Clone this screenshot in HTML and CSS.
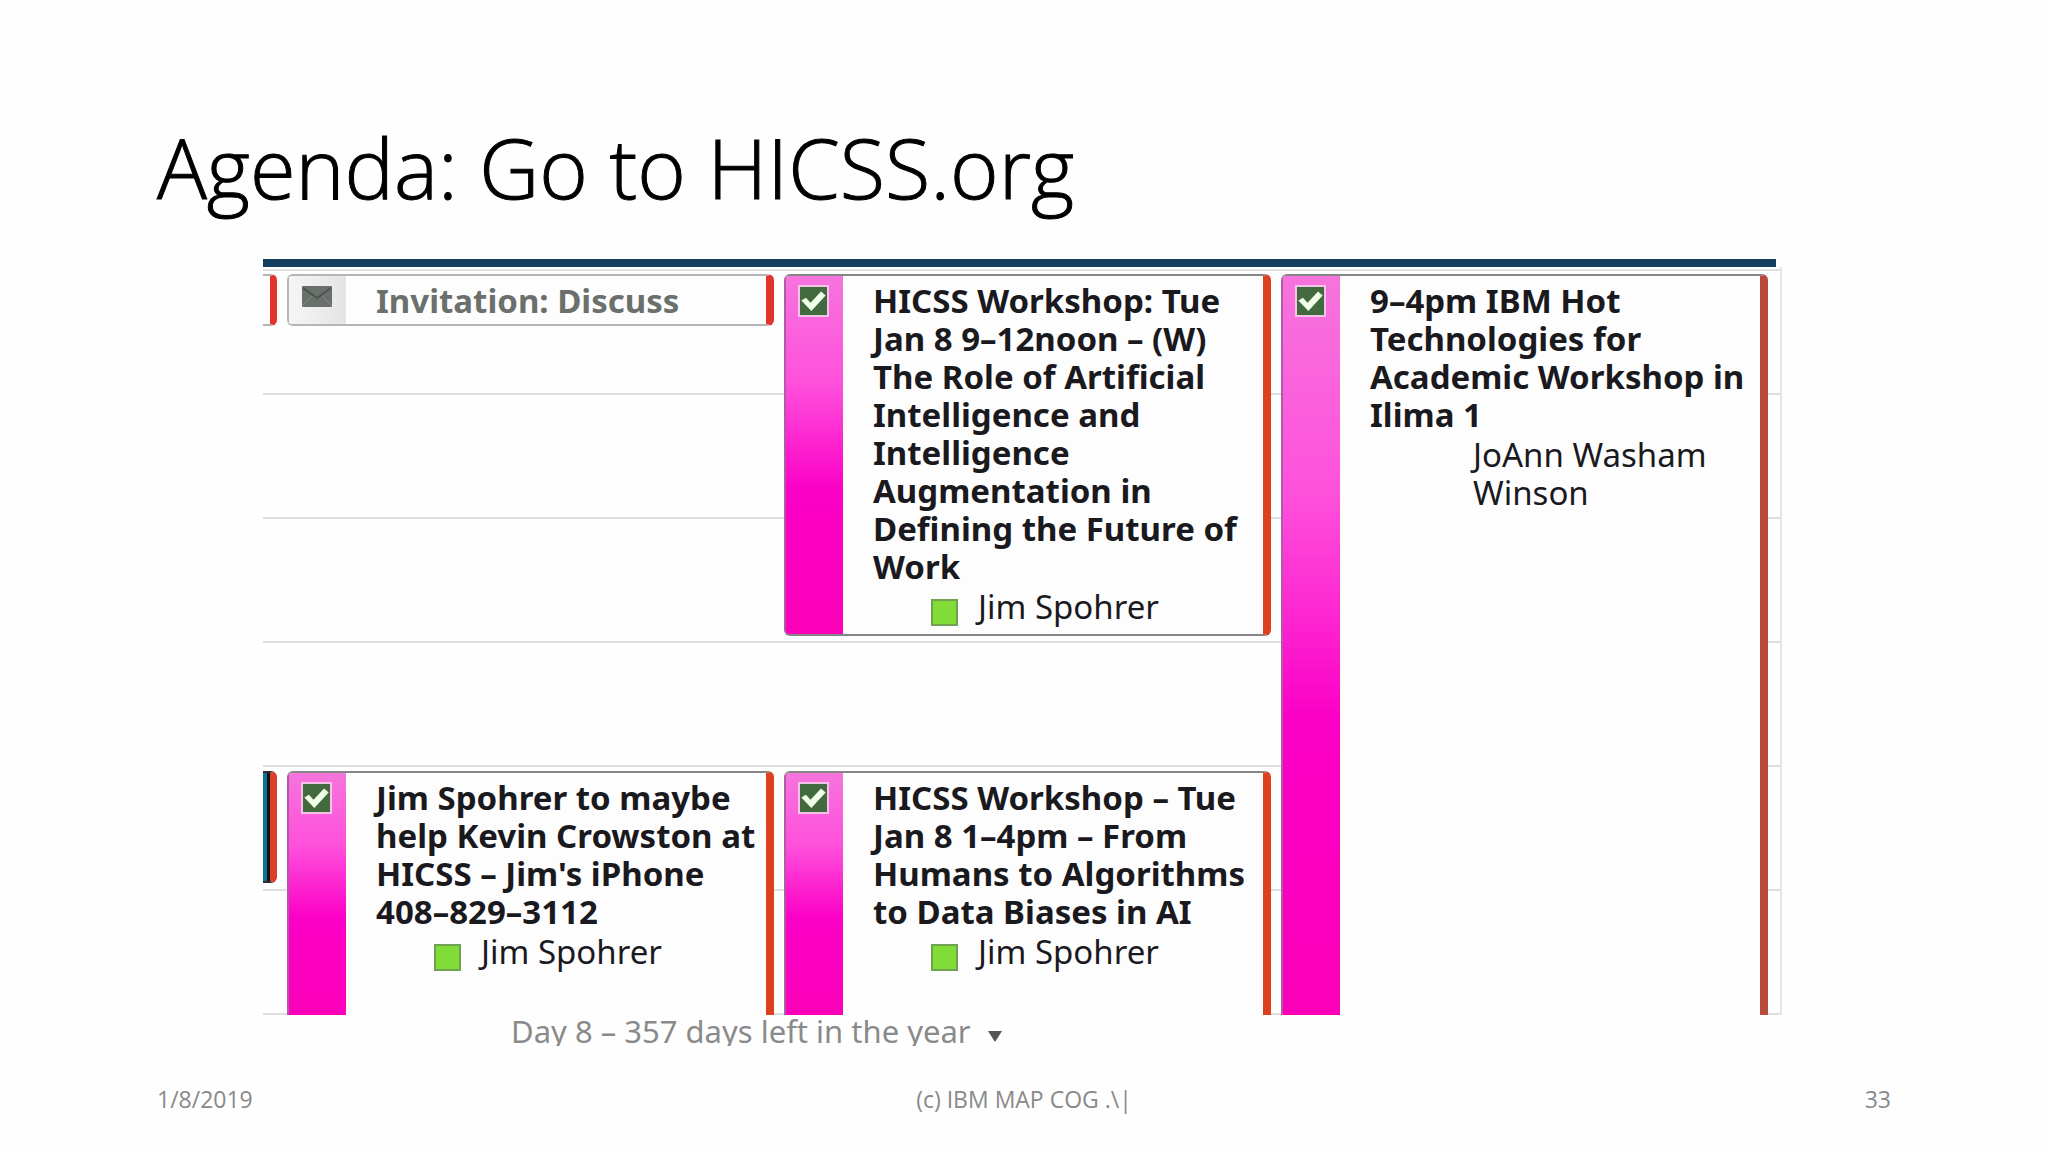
FILE: index.html
```
<!DOCTYPE html>
<html lang="en">
<head>
  <meta charset="UTF-8">
  <meta name="viewport" content="width=device-width, initial-scale=1.0">
  <title>Agenda: Go to HICSS.org</title>
  <link rel="stylesheet" href="styles.css">
</head>
<body>
  <div class="slide">
    <h1 class="title">Agenda: Go to HICSS.org</h1>

    <div class="calendar">
      <div class="top-bar"></div>

      <div class="events">
        <div class="stub"></div>

        <div class="event invitation">
          <div class="strip">
            <svg class="mail" width="32" height="24" viewBox="0 0 32 24">
              <rect x="1" y="1" width="30" height="21" rx="1" fill="#69706b"/>
              <path d="M2 3 L16 13 L30 3" fill="none" stroke="#4d544f" stroke-width="2"/>
              <path d="M2 20 L11 11 M30 20 L21 11" stroke="#848b86" stroke-width="1"/>
            </svg>
          </div>
          <div class="details">
            <div class="name">Invitation: Discuss</div>
          </div>
        </div>

        <div class="event short">
          <div class="strip"><input type="checkbox" id="roleOfAi" checked></div>
          <div class="details">
            <label class="name" for="roleOfAi">HICSS Workshop: Tue<br>Jan 8 9–12noon – (W)<br>The Role of Artificial<br>Intelligence and<br>Intelligence<br>Augmentation in<br>Defining the Future of<br>Work</label>
            <div class="person"><span class="status"></span>Jim Spohrer</div>
          </div>
        </div>

        <div class="event cut tall">
          <div class="strip"><input type="checkbox" id="hotTech" checked></div>
          <div class="details">
            <label class="name" for="hotTech">9–4pm IBM Hot<br>Technologies for<br>Academic Workshop in<br>Ilima 1</label>
            <div class="person no-status">JoAnn Washam<br>Winson</div>
          </div>
        </div>

        <div class="stub busy"></div>

        <div class="event cut">
          <div class="strip"><input type="checkbox" id="crowston" checked></div>
          <div class="details">
            <label class="name" for="crowston">Jim Spohrer to maybe<br>help Kevin Crowston at<br>HICSS – Jim's iPhone<br>408–829–3112</label>
            <div class="person"><span class="status"></span>Jim Spohrer</div>
          </div>
        </div>

        <div class="event cut">
          <div class="strip"><input type="checkbox" id="dataBiases" checked></div>
          <div class="details">
            <label class="name" for="dataBiases">HICSS Workshop – Tue<br>Jan 8 1–4pm – From<br>Humans to Algorithms<br>to Data Biases in AI</label>
            <div class="person"><span class="status"></span>Jim Spohrer</div>
          </div>
        </div>
      </div>

      <button type="button" class="day-info">Day 8 – 357 days left in the year<span class="caret"></span></button>
    </div>

    <div class="footer">
      <span>1/8/2019</span>
      <span>(c) IBM MAP COG .\|</span>
      <span class="page">33</span>
    </div>
  </div>
</body>
</html>
```

FILE: styles.css
```
body {
  margin: 0;
  background-color: #fefefe;
  font-family: "Open Sans", "Noto Sans", sans-serif;
}

.slide {
  padding: 111px 157px 0;
}

.title {
  margin: 0;
  height: 148px;
  font-size: 83px;
  font-weight: 300;
  line-height: 112px;
  color: #000;
  -webkit-text-stroke: 1px #000;
  white-space: nowrap;
}

.calendar {
  margin: 0 109px 0 106px;
  font-family: "Noto Sans", "Open Sans", sans-serif;
  font-size: 33px;
  line-height: 38px;
  color: #1a1a1e;
}

.top-bar {
  height: 8px;
  margin-right: 6px;
  background-color: #123f5e;
}

/* one hour is 124px high */
.events {
  display: grid;
  grid-template-columns: 14px 1fr 1fr 1fr;
  grid-template-rows: 497px 244px;
  column-gap: 10px;
  padding: 7px 12px 0 0;
  border-right: 2px solid #e6e6e8;
  background: linear-gradient(#dfdfe1 2px, transparent 2px) 0 2px / 100% 124px;
}

.event {
  display: flex;
  box-sizing: border-box;
  min-width: 0;
  border-top: 2px solid #858585;
  border-bottom: 2px solid #858585;
  border-right: 8px solid #dc401c;
  border-radius: 6px;
  background-color: #fefdfe;
  overflow: hidden;
  white-space: nowrap;
}

.invitation {
  height: 52px;
  border-color: #b5b5b5;
  border-right-color: #e2332c;
  color: #6b706c;
}

.short {
  height: 362px;
}

.cut {
  border-bottom: none;
  border-radius: 6px 6px 0 0;
}

.tall {
  grid-row: span 2;
  border-right-color: #b94a3e;
}

.strip {
  box-sizing: border-box;
  flex: none;
  width: 59px;
  padding: 9px 0 0 12px;
  border-left: 2px solid #b05aa8;
  background: linear-gradient(#f674dc, #ff50dc 30%, #fb00c6 60%, #fb00b8);
}

.invitation .strip {
  border-left-color: #b5b5b5;
  background: linear-gradient(90deg, #f6f6f6, #e4e4e6);
}

.mail {
  display: block;
}

input[type="checkbox"] {
  appearance: none;
  display: block;
  box-sizing: border-box;
  width: 31px;
  height: 32px;
  margin: 0;
  border: 2px solid #f3c3e8;
  background-color: #43693f;
}

input[type="checkbox"]:checked::before {
  content: "";
  display: block;
  height: 28px;
  background-color: #efffe8;
  clip-path: polygon(5% 48%, 22% 38%, 39% 56%, 78% 16%, 95% 30%, 42% 86%);
}

.details {
  padding: 6px 0 0 30px;
}

.name {
  display: block;
  font-weight: bold;
}

.person {
  display: flex;
  align-items: center;
  gap: 20px;
  margin-top: 2px;
  padding-left: 58px;
}

.no-status {
  padding-left: 103px;
}

.status {
  box-sizing: border-box;
  width: 27px;
  height: 27px;
  margin-top: 10px;
  border: 2px solid #6fa352;
  background-color: #82dc38;
}

/* events that start in the previous column */
.stub {
  box-sizing: border-box;
  height: 52px;
  border-top: 2px solid #b5b5b5;
  border-bottom: 2px solid #b5b5b5;
  border-right: 7px solid #e2332c;
  border-radius: 0 6px 6px 0;
}

.busy {
  height: 112px;
  border-color: #3a2a2c;
  border-right-color: #d8402a;
  background: linear-gradient(90deg, #0a7498 4px, #111 4px);
}

.day-info {
  display: flex;
  align-items: center;
  gap: 17px;
  height: 31px;
  margin-left: 248px;
  padding: 0;
  border: none;
  background: none;
  font: inherit;
  font-size: 31px;
  line-height: 36px;
  color: #8a8a8a;
  overflow: hidden;
  white-space: nowrap;
}

.caret {
  margin-top: 12px;
  border: 7px solid transparent;
  border-top: 11px solid #555;
  border-bottom: none;
}

.footer {
  display: grid;
  grid-template-columns: 1fr auto 1fr;
  margin-top: 37px;
  font-size: 23px;
  line-height: 32px;
  color: #898989;
}

.page {
  text-align: right;
}
```
